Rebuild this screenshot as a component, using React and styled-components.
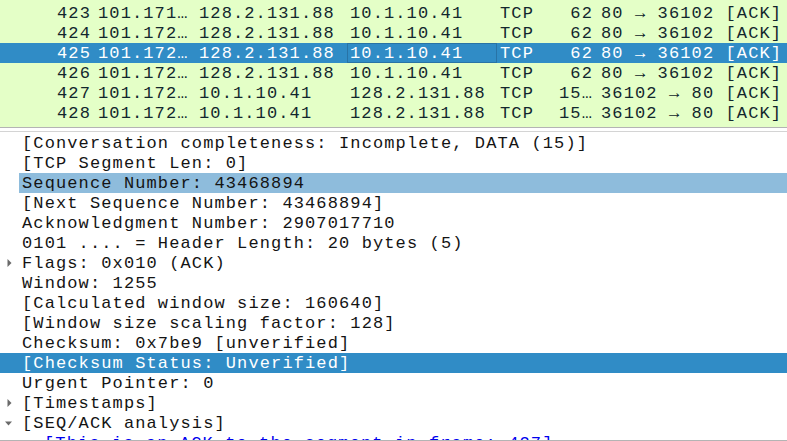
import React from "react";
import styled, { createGlobalStyle, css } from "styled-components";

const GlobalStyle = createGlobalStyle`
  html, body { margin: 0; padding: 0; background: #ffffff; overflow: hidden; }
  * { box-sizing: border-box; }
`;

const mono = css`
  font-family: "Liberation Mono", "DejaVu Sans Mono", monospace;
  font-size: 17px;
  letter-spacing: 1.12px;
  white-space: pre;
`;

const Frame = styled.div`
  width: 787px;
  height: 441px;
  display: flex;
  flex-direction: column;
  background: #ffffff;
  overflow: hidden;
`;

const PacketList = styled.div`
  height: 128px;
  flex: none;
  background: #e4ffc7;
  padding-top: 3px;
  border-bottom: 1px solid #b4b4b4;
  overflow: hidden;
`;

const PacketRow = styled.div`
  ${mono};
  display: grid;
  grid-template-columns: 95px 101px 151px 150px 50px 50px 1fr;
  height: 20px;
  line-height: 22px;
  color: ${(p) => (p.$selected ? "#ffffff" : "#12272e")};
  background: ${(p) => (p.$selected ? "#308cc6" : "transparent")};
`;

const Cell = styled.div`
  overflow: hidden;
  text-align: ${(p) => (p.$right ? "right" : "left")};
  padding-left: ${(p) => (p.$right ? 0 : p.$pl ?? 3)}px;
  padding-right: ${(p) => (p.$right ? 4 : 0)}px;
  ${(p) =>
    p.$focus &&
    css`
      box-shadow: inset 0 0 0 1px #2873a6;
    `}
`;

const Splitter = styled.div`
  height: 3px;
  flex: none;
  background: #ffffff;
`;

const Details = styled.div`
  height: 310px;
  flex: none;
  border-top: 1px solid #d4d4d4;
  border-bottom: 1px solid #b4b4b4;
  padding-top: 1px;
  overflow: hidden;
`;

const TreeRow = styled.div`
  ${mono};
  display: flex;
  height: 20px;
  line-height: 22px;
  padding-left: ${(p) => p.$level * 22}px;
  background: ${(p) => (p.$selected ? "#308cc6" : "transparent")};
  color: ${(p) => (p.$selected ? "#ffffff" : p.$link ? "#0000ee" : "#141414")};
`;

const Toggle = styled.div`
  width: 19px;
  flex: none;
  display: flex;
  align-items: center;
  justify-content: flex-start;
  padding-left: ${(p) => (p.$open ? 5 : 7)}px;
`;

const Label = styled.div`
  flex: 1;
  padding-left: 3px;
  background: ${(p) => (p.$related ? "#8ebcdc" : "transparent")};
`;

const Arrow = ({ open }) =>
  open ? (
    <svg width="7" height="5" viewBox="0 0 7 5">
      <polygon points="0,0.5 7,0.5 3.5,4.5" fill="#6a6a6a" />
    </svg>
  ) : (
    <svg width="5" height="8" viewBox="0 0 5 8">
      <polygon points="0.5,0 4.5,4 0.5,8" fill="#6a6a6a" />
    </svg>
  );

const packets = [
  ["423", "101.171…", "128.2.131.88", "10.1.10.41", "TCP", "62", "80 → 36102 [ACK]"],
  ["424", "101.172…", "128.2.131.88", "10.1.10.41", "TCP", "62", "80 → 36102 [ACK]"],
  ["425", "101.172…", "128.2.131.88", "10.1.10.41", "TCP", "62", "80 → 36102 [ACK]"],
  ["426", "101.172…", "128.2.131.88", "10.1.10.41", "TCP", "62", "80 → 36102 [ACK]"],
  ["427", "101.172…", "10.1.10.41", "128.2.131.88", "TCP", "15…", "36102 → 80 [ACK]"],
  ["428", "101.172…", "10.1.10.41", "128.2.131.88", "TCP", "15…", "36102 → 80 [ACK]"],
];

const tree = [
  { text: "[Conversation completeness: Incomplete, DATA (15)]" },
  { text: "[TCP Segment Len: 0]" },
  { text: "Sequence Number: 43468894", related: true },
  { text: "[Next Sequence Number: 43468894]" },
  { text: "Acknowledgment Number: 2907017710" },
  { text: "0101 .... = Header Length: 20 bytes (5)" },
  { text: "Flags: 0x010 (ACK)", toggle: "closed" },
  { text: "Window: 1255" },
  { text: "[Calculated window size: 160640]" },
  { text: "[Window size scaling factor: 128]" },
  { text: "Checksum: 0x7be9 [unverified]" },
  { text: "[Checksum Status: Unverified]", selected: true },
  { text: "Urgent Pointer: 0" },
  { text: "[Timestamps]", toggle: "closed" },
  { text: "[SEQ/ACK analysis]", toggle: "open" },
  { text: "[This is an ACK to the segment in frame: 427]", level: 1, link: true },
];

export default function App() {
  return (
    <>
      <GlobalStyle />
      <Frame>
        <PacketList>
          {packets.map((p, i) => {
            const sel = p[0] === "425";
            return (
              <PacketRow key={i} $selected={sel}>
                <Cell $right>{p[0]}</Cell>
                <Cell>{p[1]}</Cell>
                <Cell>{p[2]}</Cell>
                <Cell $focus={sel}>{p[3]}</Cell>
                <Cell>{p[4]}</Cell>
                <Cell $right>{p[5]}</Cell>
                <Cell $pl={4}>{p[6]}</Cell>
              </PacketRow>
            );
          })}
        </PacketList>
        <Splitter />
        <Details>
          {tree.map((n, i) => (
            <TreeRow key={i} $level={n.level || 0} $selected={n.selected} $link={n.link}>
              <Toggle $open={n.toggle === "open"}>
                {n.toggle && <Arrow open={n.toggle === "open"} />}
              </Toggle>
              <Label $related={n.related}>{n.text}</Label>
            </TreeRow>
          ))}
        </Details>
      </Frame>
    </>
  );
}
